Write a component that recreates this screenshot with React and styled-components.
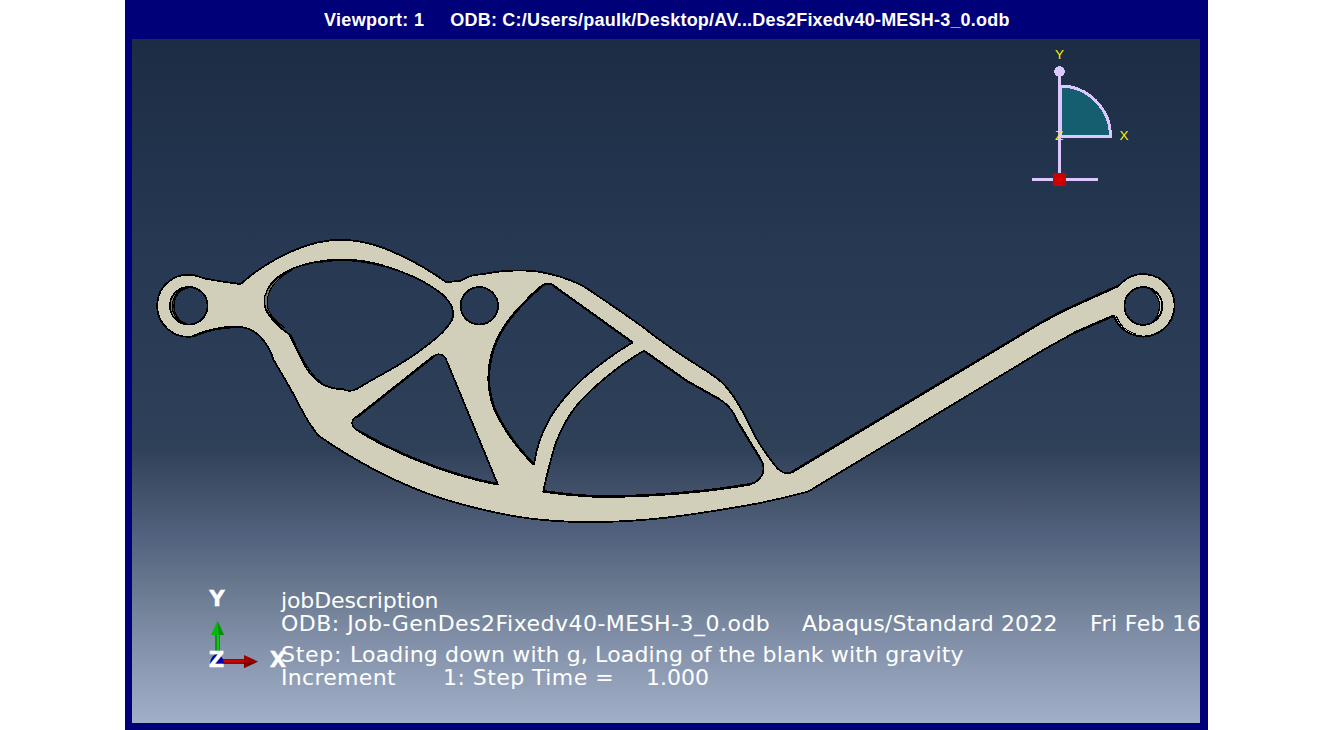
import React from "react";
import styled, { createGlobalStyle } from "styled-components";

const GlobalStyle = createGlobalStyle`
  html, body { margin: 0; padding: 0; background: #ffffff; }
  body { overflow: hidden; }
`;

const Page = styled.div`
  display: flex;
  justify-content: center;
  width: 1333px;
  height: 730px;
`;

const Frame = styled.main`
  box-sizing: border-box;
  display: flex;
  flex-direction: column;
  width: 1083px;
  height: 730px;
  padding: 0 8px 7px 7px;
  background: #000078;
`;

const TitleBar = styled.header`
  box-sizing: border-box;
  display: flex;
  align-items: center;
  gap: 26px;
  height: 39px;
  padding: 1px 0 0 192px;
  color: #ffffff;
  font: bold 18px/38px "Liberation Sans", Arial, sans-serif;
  white-space: nowrap;
`;

const TitleText = styled.span`
  letter-spacing: ${(p) => p.$spacing || 0}px;
`;

const Viewport = styled.section`
  position: relative;
  flex: 1;
  overflow: hidden;
  background: linear-gradient(
    to bottom,
    #1c2c44 0%,
    #263852 30%,
    #2f4159 60%,
    #44536b 67%,
    #536380 73%,
    #65758b 79%,
    #8190a8 88%,
    #a1b0c7 100%
  );
`;

const Scene = styled.svg`
  display: block;
  width: 1068px;
  height: 684px;
`;

const StateBlock = styled.div`
  position: absolute;
  left: 149px;
  top: 550px;
  display: flex;
  flex-direction: column;
  gap: 8px;
  color: #ffffff;
  font: 22px/23px "DejaVu Sans", Verdana, sans-serif;
  white-space: pre;
`;

const StateGroup = styled.div`
  display: flex;
  flex-direction: column;
`;

const StateLine = styled.div`
  display: flex;
  height: 23px;
`;

const Field = styled.span`
  flex: none;
  width: ${(p) => (p.$width ? p.$width + "px" : "auto")};
  letter-spacing: ${(p) => p.$spacing || 0}px;
`;

// Smooth runs of points; each run ends in a sharp corner.
const contour = (runs) => {
  let d = `M${runs[0][0].join(" ")}`;
  runs.forEach((pts) => {
    const n = pts.length;
    const unit = (p, q) => {
      const m = Math.hypot(q[0] - p[0], q[1] - p[1]) || 1;
      return [(q[0] - p[0]) / m, (q[1] - p[1]) / m, m];
    };
    const tangents = pts.map((p, i) => {
      if (i === 0 || i === n - 1) return null;
      const u = unit(pts[i - 1], p);
      const v = unit(p, pts[i + 1]);
      const t = [u[0] * v[2] + v[0] * u[2], u[1] * v[2] + v[1] * u[2]];
      const m = Math.hypot(t[0], t[1]) || 1;
      return [t[0] / m, t[1] / m];
    });
    const reflect = (t, u) => {
      if (!t) return [u[0], u[1]];
      const k = 2 * (t[0] * u[0] + t[1] * u[1]);
      return [k * u[0] - t[0], k * u[1] - t[1]];
    };
    for (let i = 0; i < n - 1; i++) {
      const b = pts[i];
      const c = pts[i + 1];
      const u = unit(b, c);
      const t1 = tangents[i] || reflect(tangents[i + 1], u);
      const t2 = tangents[i + 1] || reflect(tangents[i], u);
      const k = u[2] / 3;
      d += `C${b[0] + t1[0] * k} ${b[1] + t1[1] * k} ${c[0] - t2[0] * k} ${c[1] - t2[1] * k} ${c[0]} ${c[1]}`;
    }
  });
  return d;
};

const body =
  contour([
    [[205, 278.5], [222, 281.5], [240.7, 284]],
    [[240.7, 284], [256, 271.7], [276.7, 258.7], [300, 248], [320, 242], [340, 239.8], [358, 241.2], [376.7, 245.7], [403.3, 256.7], [423.3, 267.3], [446, 282]],
    [[446, 282], [460, 281]],
    [[460, 281], [471.7, 275.7], [483, 274], [503.3, 271.2], [519, 270.5], [535, 271.2], [550, 274], [568, 279.4], [584, 286.7], [598, 296], [640, 325], [660, 340], [677, 352], [695, 363.7], [713.3, 375.7], [722, 382.5], [731, 393], [741.7, 410], [758.3, 441.7], [771.7, 461], [780, 470.5], [786, 473.3], [792, 472]],
    [[792, 472], [1040, 323.3]],
    [[1040, 323.3], [1063.3, 310.7]],
    [[1063.3, 310.7], [1119, 285.5]],
  ]) +
  "L1122 282.5A31.2 31.2 0 1 1 1114 316" +
  contour([
    [[1114, 316], [1073.3, 333.3]],
    [[1073.3, 333.3], [1045, 349]],
    [[1045, 349], [808.3, 491.5]],
    [[808.3, 491.5], [763.3, 502.3], [713.3, 511], [663.3, 518], [616.7, 521.5], [570, 521.7], [530, 518.5], [480, 509], [426.7, 493.2], [370, 467.3], [318.3, 435.5]],
    [[318.3, 435.5], [310, 424], [291.7, 391], [273.3, 359.5]],
    [[273.3, 359.5], [268.3, 347.5], [260, 336.5], [249, 329], [238, 326.6], [221.7, 328], [206, 332], [193.3, 336.3]],
  ]).replace("M", "L") +
  "A31 31 0 1 1 195 275.5L205 278.5Z";

const upperLeft = contour([
  [[341.7, 259.8], [363.3, 261.5], [383.3, 265.8], [410, 275.3], [430, 285.7], [445, 297], [452.3, 308.3], [452.7, 317.5], [445, 329.5], [426.7, 345.7], [411, 357], [393.3, 368], [372, 380], [357, 388.8]],
  [[357, 388.8], [349, 390.8], [343.3, 389.3]],
  [[343.3, 389.3], [331.7, 387.8], [320, 382.7], [310, 373.3], [300, 356], [289, 334]],
  [[289, 334], [274.3, 321.5], [265.5, 308.3], [265, 298], [271.7, 283.3], [286.7, 271.5], [310, 263.2], [341.7, 259.8]],
]) + "Z";

const triangle = contour([
  [[434, 356], [438.7, 354.3], [443.5, 356], [446.7, 361]],
  [[446.7, 361], [497.7, 484.3]],
  [[497.7, 484.3], [460, 475], [410, 457], [360, 431.7], [353.3, 426.7], [352.7, 420.7], [356.7, 416.7]],
  [[356.7, 416.7], [434, 356]],
]) + "Z";

const crescent = contour([
  [[544, 284.3], [548, 283.7], [552.5, 284.7]],
  [[552.5, 284.7], [632.5, 342.5]],
  [[632.5, 342.5], [604, 361.5], [573.3, 388], [550, 418], [539.5, 441], [534, 464.3]],
  [[534, 464.3], [510, 436], [493.5, 406], [488.7, 379], [491.7, 355], [503.3, 328.3], [521, 306], [544, 284.3]],
]) + "Z";

const lowerRight = contour([
  [[644, 350.7], [687, 381]],
  [[687, 381], [719, 399]],
  [[719, 399], [727.5, 405.5], [736.7, 420]],
  [[736.7, 420], [761, 460]],
  [[761, 460], [763.5, 470], [758.3, 480], [750, 484.3]],
  [[750, 484.3], [706.7, 490.7], [648, 495.6], [593.3, 496.7], [543.3, 491.3]],
  [[543.3, 491.3], [550, 463.3], [557, 440], [574.5, 408.3], [604, 379], [644, 350.7]],
]) + "Z";

const circle = (cx, cy, r) =>
  `M${cx - r} ${cy}a${r} ${r} 0 1 0 ${r * 2} 0a${r} ${r} 0 1 0 ${-r * 2} 0Z`;

const bores = circle(188.8, 305.8, 18.8) + circle(479.3, 305.8, 18.7) + circle(1143.3, 306, 18.9);

const Part = () => (
  <g shapeRendering="crispEdges" stroke="#000000" strokeWidth="1.8" fill="none" strokeLinejoin="round">
    <path fill="#d1cfba" fillRule="evenodd" d={body + upperLeft + triangle + crescent + lowerRight + bores} />
    <path strokeWidth="2.5" d="M357 417L434 356M792 472L1040 323.3L1063.3 310.7L1119 285.5M1113 316L1073 333.3M193.3 336Q218 326 240 327" />
    <path strokeWidth="2.5" d={contour([[[318, 262], [341.7, 259.8], [363.3, 261.5], [383.3, 265.8]]])} />
    <path strokeWidth="2.6" d={contour([[[360, 431.7], [410, 457], [460, 475], [497.7, 484.3]]])} />
    <path strokeWidth="2.6" d={contour([[[534, 464.3], [510, 436], [493.5, 406], [488.7, 379], [491.7, 355], [503.3, 328.3], [521, 306], [544, 284.3]]])} />
    <path strokeWidth="2.6" d={contour([[[543.3, 491.3], [593.3, 496.3], [648, 495.3], [706.7, 490.5], [750, 484.3]]])} />
    <path strokeWidth="2.2" d="M552.5 285L632 342M645 351.5L687 381L719 399M736.7 420L761 460" />
    <path fill="#77776a" strokeWidth="1.2" d="M291 270.5C267 281 258 300 269 314Q276 321 285 328Q270 318 267.5 307Q266 296 272 287Q278 278 291 270.5Z" />
    <path fill="#77776a" strokeWidth="1.2" d="M289 333Q297 352 307 369Q313 378 322 383.5Q314 377 309.5 370Q301 358 292 337Z" />
    <path fill="#77776a" strokeWidth="1.2" d="M186 287.5A18.5 18.5 0 0 0 183 323.5A19.5 19.5 0 0 1 186 287.5Z" />
    <path strokeWidth="1.2" d="M188.8 287.7A16.5 18.3 0 0 0 187 323.8" />
    <path fill="#d1cfba" strokeWidth="1.2" d="M1150 288.5Q1160 296 1159.5 307Q1159 317 1151 323.5Q1163 316 1162 304Q1161 293 1150 288.5Z" />
    <path d="M1113.5 316C1119 329 1130 336 1143 336.5" />
    <path strokeWidth="1" d="M1116.5 316.5C1120 326 1128 332 1136 334" />
  </g>
);

const ViewTriad = () => (
  <g shapeRendering="crispEdges">
    <path d="M1060 86A50.5 50.5 0 0 1 1110.5 136H1060Z" fill="#155e6f" stroke="#dcc8ff" strokeWidth="3" />
    <path d="M1059.5 72V180M1032 179.5H1098" stroke="#dcc8ff" strokeWidth="3" />
    <circle cx="1059.5" cy="71.5" r="5.3" fill="#dcc8ff" />
    <path d="M1053 173h13v13h-13z" fill="#cc0000" />
    <path d="M1057 177h5v5h-5z" fill="#e00000" />
    <g fill="#ffee00" fontFamily="Liberation Sans, Arial, sans-serif" fontSize="13.5" textAnchor="middle">
      <text x="1059.5" y="59">Y</text>
      <text x="1124" y="140">X</text>
      <text x="1059" y="140">Z</text>
    </g>
  </g>
);

const AxisTriad = () => (
  <g>
    <path d="M215 634h5v22h-5z" fill="#079a0c" />
    <path d="M217 634h2v22h-2z" fill="#16c51b" />
    <path d="M217.5 621L224 635H211Z" fill="#00b908" />
    <path d="M217.5 621L224 635H219Z" fill="#078c0b" />
    <path d="M223 659h22v5h-22z" fill="#a30000" />
    <path d="M223 660h22v2h-22z" fill="#cf0000" />
    <path d="M244 655L258 661.5L244 668Z" fill="#a20000" />
    <path d="M244 663L258 661.5L244 668Z" fill="#760000" />
    <path d="M210 664Q211 654 218 654Q223 656 224 664Z" fill="#0000a8" />
    <g
      fill="#ffffff"
      stroke="#ffffff"
      strokeWidth="0.3"
      fontFamily="DejaVu Sans, Verdana, sans-serif"
      fontSize="21.5"
      fontWeight="bold"
      textAnchor="middle"
    >
      <text x="217" y="606">Y</text>
      <text x="216.5" y="667">Z</text>
      <text x="278" y="667">X</text>
    </g>
  </g>
);

export default function App() {
  return (
    <Page>
      <GlobalStyle />
      <Frame>
        <TitleBar>
          <TitleText $spacing={0.33}>Viewport: 1</TitleText>
          <TitleText $spacing={0.21}>ODB: C:/Users/paulk/Desktop/AV...Des2Fixedv40-MESH-3_0.odb</TitleText>
        </TitleBar>
        <Viewport>
          <Scene viewBox="132 39 1068 684">
            <Part />
            <ViewTriad />
            <AxisTriad />
          </Scene>
          <StateBlock>
            <StateGroup>
              <StateLine><Field $spacing={-0.1}>jobDescription</Field></StateLine>
              <StateLine>
                <Field $width={521} $spacing={0.48}>ODB: Job-GenDes2Fixedv40-MESH-3_0.odb</Field>
                <Field $width={288} $spacing={0.16}>Abaqus/Standard 2022</Field>
                <Field $spacing={0.4}>Fri Feb 16</Field>
              </StateLine>
            </StateGroup>
            <StateGroup>
              <StateLine><Field $width={69} $spacing={0.7}>Step: </Field><Field $spacing={0.16}>Loading down with g, Loading of the blank with gravity</Field></StateLine>
              <StateLine>
                <Field $width={162} $spacing={0.3}>Increment</Field>
                <Field $width={203} $spacing={0.45}>1: Step Time =</Field>
                <Field>1.000</Field>
              </StateLine>
            </StateGroup>
          </StateBlock>
        </Viewport>
      </Frame>
    </Page>
  );
}
